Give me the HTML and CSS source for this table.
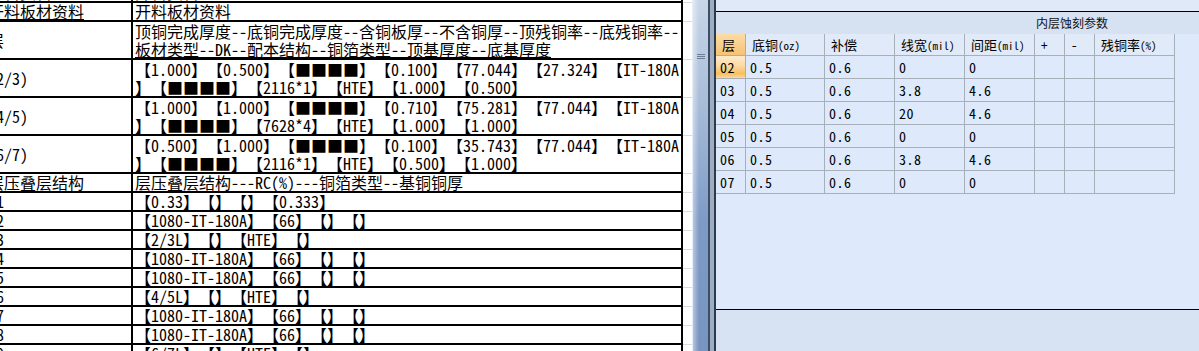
FILE: index.html
```html
<!DOCTYPE html>
<html lang="zh-CN">
<head>
<meta charset="utf-8">
<title>叠层资料</title>
<link rel="stylesheet" href="styles.css">
</head>
<body>
<div class="app">
  <div class="sheet-wrap">
    <div class="sheet">
      <div class="row s"><div class="c1">开料资料</div><div class="c2">开料资料</div><div class="c3"></div></div>
      <div class="row s"><div class="c1 u">开料板材资料</div><div class="c2">开料板材资料</div><div class="c3"></div></div>
      <div class="row d"><div class="c1">层</div><div class="c2">顶铜完成厚度--底铜完成厚度--含铜板厚--不含铜厚--顶残铜率--底残铜率--<br><span class="u">板材类型--DK--配本结构--铜箔类型--顶基厚度--底基厚度</span></div><div class="c3"></div></div>
      <div class="row d"><div class="c1">(2/3)</div><div class="c2">【1.000】【0.500】【■■■■】【0.100】【77.044】【27.324】【IT-180A<br>】【■■■■】【2116*1】【HTE】【1.000】【0.500】</div><div class="c3"></div></div>
      <div class="row d"><div class="c1">(4/5)</div><div class="c2">【1.000】【1.000】【■■■■】【0.710】【75.281】【77.044】【IT-180A<br>】【■■■■】【7628*4】【HTE】【1.000】【1.000】</div><div class="c3"></div></div>
      <div class="row d"><div class="c1">(6/7)</div><div class="c2">【0.500】【1.000】【■■■■】【0.100】【35.743】【77.044】【IT-180A<br>】【■■■■】【2116*1】【HTE】【0.500】【1.000】</div><div class="c3"></div></div>
      <div class="row s"><div class="c1">层压叠层结构</div><div class="c2">层压叠层结构---RC(%)---铜箔类型--基铜铜厚</div><div class="c3"></div></div>
      <div class="row s"><div class="c1">L1</div><div class="c2">【0.33】【】【】【0.333】</div><div class="c3"></div></div>
      <div class="row s"><div class="c1">L2</div><div class="c2">【1080-IT-180A】【66】【】【】</div><div class="c3"></div></div>
      <div class="row s"><div class="c1">L3</div><div class="c2">【2/3L】【】【HTE】【】</div><div class="c3"></div></div>
      <div class="row s"><div class="c1">L4</div><div class="c2">【1080-IT-180A】【66】【】【】</div><div class="c3"></div></div>
      <div class="row s"><div class="c1">L5</div><div class="c2">【1080-IT-180A】【66】【】【】</div><div class="c3"></div></div>
      <div class="row s"><div class="c1">L6</div><div class="c2">【4/5L】【】【HTE】【】</div><div class="c3"></div></div>
      <div class="row s"><div class="c1">L7</div><div class="c2">【1080-IT-180A】【66】【】【】</div><div class="c3"></div></div>
      <div class="row s"><div class="c1">L8</div><div class="c2">【1080-IT-180A】【66】【】【】</div><div class="c3"></div></div>
      <div class="row s"><div class="c1">L9</div><div class="c2">【6/7L】【】【HTE】【】</div><div class="c3"></div></div>
    </div>
  </div>

  <div class="splitter">
    <div class="sp-light"></div>
    <div class="sp-blue"><div class="grip"></div></div>
    <div class="sp-dark"></div>
    <div class="sp-mid"></div>
    <div class="sp-dark2"></div>
  </div>

  <div class="panel">
    <div class="p-top"></div>
    <div class="band">内层蚀刻参数</div>
    <div class="grid">
      <div class="hr">
        <div class="cell w30 ind-h">层</div>
        <div class="cell w79">底铜<span class="sm">(oz)</span></div>
        <div class="cell w70">补偿</div>
        <div class="cell w70">线宽<span class="sm">(mil)</span></div>
        <div class="cell w70">间距<span class="sm">(mil)</span></div>
        <div class="cell w30">+</div>
        <div class="cell w30">-</div>
        <div class="cell w80">残铜率 <span class="sm">(%)</span></div>
      </div>
      <div class="tr">
        <div class="cell w30 ind-r">02</div><div class="cell w79">0.5</div><div class="cell w70">0.6</div><div class="cell w70">0</div><div class="cell w70">0</div><div class="cell w30"></div><div class="cell w30"></div><div class="cell w80"></div>
      </div>
      <div class="tr">
        <div class="cell w30">03</div><div class="cell w79">0.5</div><div class="cell w70">0.6</div><div class="cell w70">3.8</div><div class="cell w70">4.6</div><div class="cell w30"></div><div class="cell w30"></div><div class="cell w80"></div>
      </div>
      <div class="tr">
        <div class="cell w30">04</div><div class="cell w79">0.5</div><div class="cell w70">0.6</div><div class="cell w70">20</div><div class="cell w70">4.6</div><div class="cell w30"></div><div class="cell w30"></div><div class="cell w80"></div>
      </div>
      <div class="tr">
        <div class="cell w30">05</div><div class="cell w79">0.5</div><div class="cell w70">0.6</div><div class="cell w70">0</div><div class="cell w70">0</div><div class="cell w30"></div><div class="cell w30"></div><div class="cell w80"></div>
      </div>
      <div class="tr">
        <div class="cell w30">06</div><div class="cell w79">0.5</div><div class="cell w70">0.6</div><div class="cell w70">3.8</div><div class="cell w70">4.6</div><div class="cell w30"></div><div class="cell w30"></div><div class="cell w80"></div>
      </div>
      <div class="tr">
        <div class="cell w30">07</div><div class="cell w79">0.5</div><div class="cell w70">0.6</div><div class="cell w70">0</div><div class="cell w70">0</div><div class="cell w30"></div><div class="cell w30"></div><div class="cell w80"></div>
      </div>
    </div>
    <div class="spacer"></div>
    <div class="p-bottom"></div>
  </div>
</div>
</body>
</html>
```

FILE: styles.css
```css
* { box-sizing: border-box; }
html, body { margin: 0; padding: 0; }
body {
  width: 1199px;
  height: 351px;
  overflow: hidden;
  background: #fff;
  color: #000;
  font-family: "Noto Sans Mono CJK SC", "Noto Sans CJK SC", "Liberation Mono", monospace;
  text-spacing-trim: space-all;
}
.app { display: flex; height: 351px; }

/* ---- spreadsheet ---- */
.sheet-wrap { width: 692px; flex: none; overflow: hidden; }
.sheet { margin-left: -14px; margin-top: -16px; font-size: 16px; }
.row { display: flex; }
.row.s { height: 19px; line-height: 17px; }
.row.d { height: 38px; line-height: 18px; }
.c1 {
  width: 147px; flex: none;
  border-right: 2px solid #000; border-bottom: 2px solid #000;
  padding-left: 2px; white-space: nowrap; overflow: hidden;
}
.d .c1 { display: flex; align-items: center; }
.c2 {
  width: 550px; flex: none;
  border-right: 2px solid #000; border-bottom: 2px solid #000;
  padding-left: 2px; white-space: nowrap; overflow: hidden;
}
.c3 { flex: 1; border-bottom: 1px solid #d9dbde; }
.u { text-decoration: underline; text-underline-offset: 1px; }

/* ---- splitter ---- */
.splitter { width: 24px; flex: none; display: flex; }
.sp-light { width: 1px; background: #e6edf7; }
.sp-blue {
  width: 15px; padding-top: 54px; padding-left: 4px;
  background:
    linear-gradient(to right, rgba(255,255,255,0.45), rgba(255,255,255,0) 40%),
    linear-gradient(#c9d6e8 0, #a6bbd8 110px, #7e9bc6 220px, #7894c0 100%);
}
.grip {
  width: 8px; height: 5px;
  background: repeating-linear-gradient(#6c7e98 0 1px, transparent 1px 2px);
}
.sp-dark { width: 2px; background: #3e4d61; }
.sp-mid { width: 4px; background: #9cadc4; }
.sp-dark2 { width: 2px; background: #2e3b4b; }

/* ---- right panel ---- */
.panel {
  flex: 1; display: flex; flex-direction: column;
  background: #deeafb;
}
.p-top { height: 12px; flex: none; background: #dfe9f8; border-bottom: 1px solid #000; }
.band {
  height: 22px; flex: none; background: #d6e2f1;
  font-size: 12px; line-height: 22px; padding-left: 320px; color: #111;
}
.grid { flex: none; }
.hr, .tr { display: flex; }
.hr { height: 22px; }
.tr { height: 23px; }
.cell {
  flex: none; display: flex; align-items: center;
  border-right: 1px solid #a7afb9; border-bottom: 1px solid #a7afb9;
  padding-left: 4px; white-space: nowrap;
}
.hr .cell { padding-left: 6px; font-size: 13px; background: #e0eaf8; }
.tr .cell { font-size: 14px; letter-spacing: 0.5px; }
.sm { font-size: 11px; }
.w30 { width: 30px; }
.w79 { width: 79px; }
.w70 { width: 70px; }
.w80 { width: 80px; }
.hr .ind-h { background: linear-gradient(#fcdca6, #f6c274); }
.ind-r { background: linear-gradient(#fdebd0 0%, #fbd9a2 45%, #f6bf5f 80%, #fbd89e 100%); }
.spacer { flex: 1; }
.p-bottom { height: 42px; flex: none; border-top: 1px solid #000; background: #d7e3f2; }
```
